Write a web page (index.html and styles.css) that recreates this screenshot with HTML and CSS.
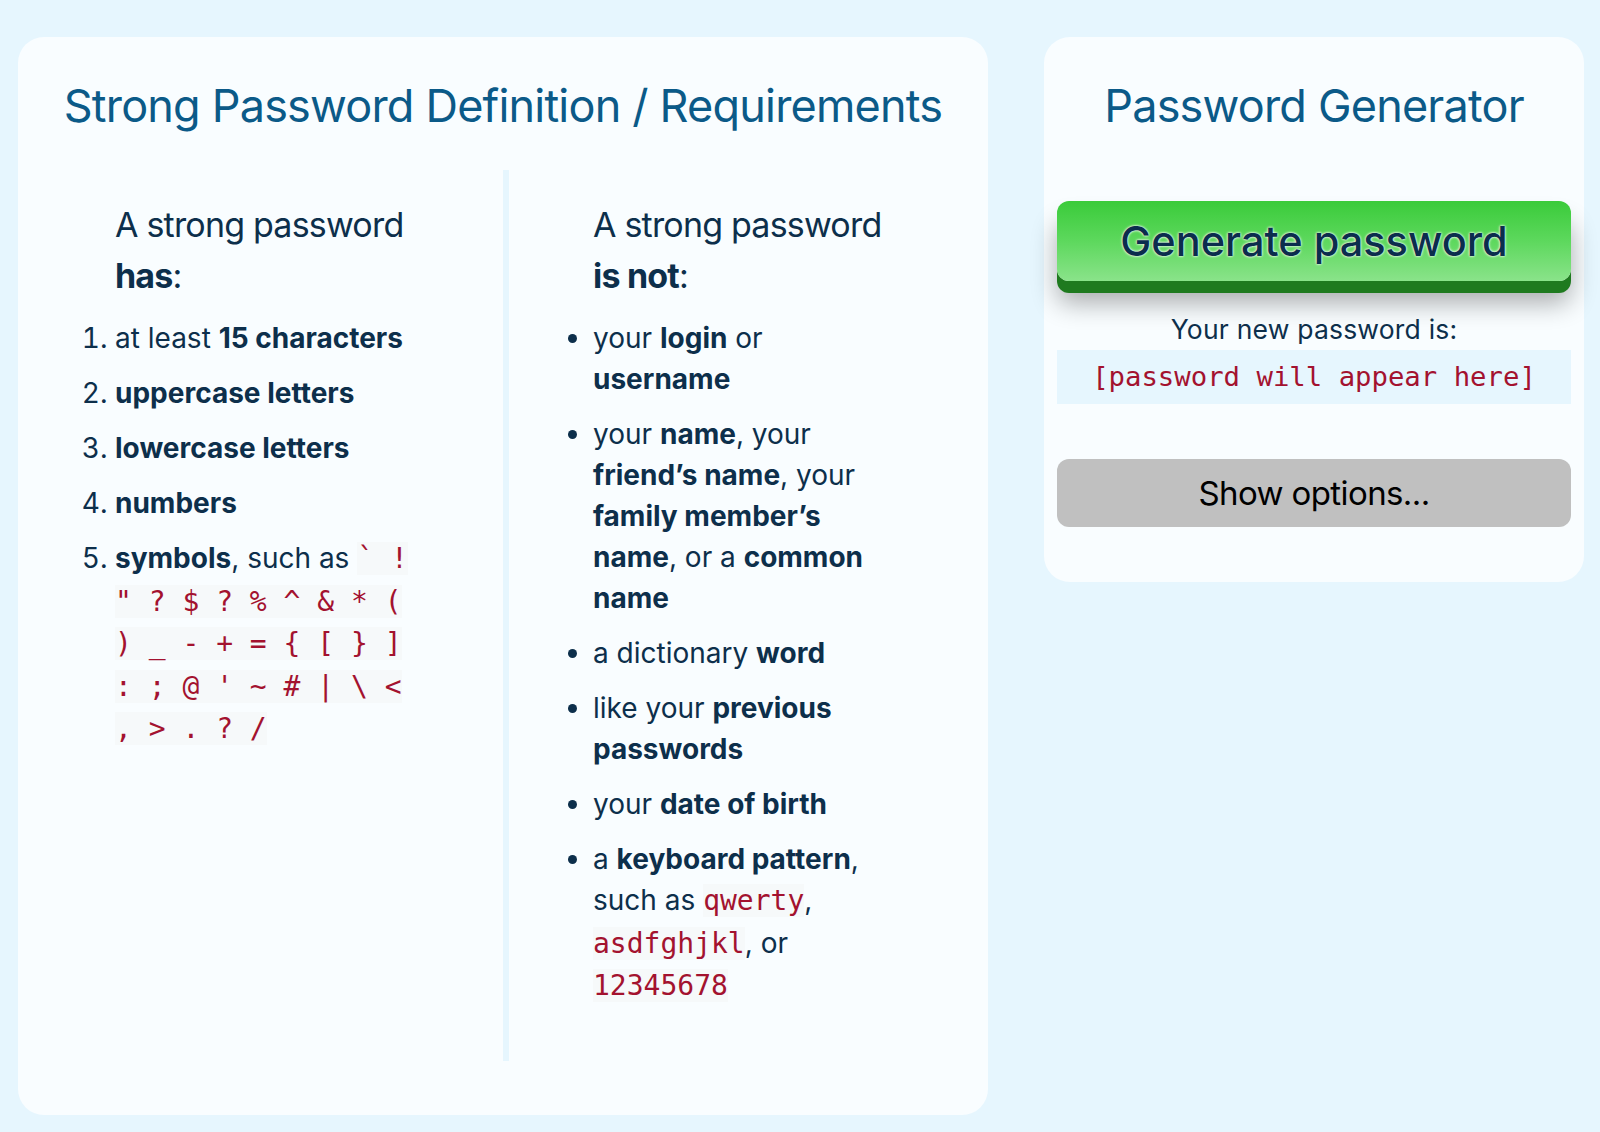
FILE: index.html
```
<!DOCTYPE html>
<html lang="en">
<head>
<meta charset="utf-8">
<title>Strong Password Generator</title>
<link rel="stylesheet" href="styles.css">
</head>
<body>
<main class="page">
  <section class="card card-info">
    <h1 class="card-title">Strong Password Definition / Requirements</h1>
    <div class="columns">
      <div class="col col-has">
        <h3 class="col-title">A strong password <strong>has</strong>:</h3>
        <ol class="req-list">
          <li>at least <strong>15 characters</strong></li>
          <li><strong>uppercase letters</strong></li>
          <li><strong>lowercase letters</strong></li>
          <li><strong>numbers</strong></li>
          <li><strong>symbols</strong>, such as <code>` ! " ? $ ? % ^ &amp; * ( ) _ - + = { [ } ] : ; @ ' ~ # | \ &lt; , &gt; . ? /</code></li>
        </ol>
      </div>
      <div class="divider"></div>
      <div class="col col-not">
        <h3 class="col-title">A strong password <strong>is not</strong>:</h3>
        <ul class="req-list">
          <li>your <strong>login</strong> or <strong>username</strong></li>
          <li>your <strong>name</strong>, your <strong>friend’s name</strong>, your <strong>family member’s name</strong>, or a <strong>common name</strong></li>
          <li>a dictionary <strong>word</strong></li>
          <li>like your <strong>previous passwords</strong></li>
          <li>your <strong>date of birth</strong></li>
          <li>a <strong>keyboard pattern</strong>, such as <code>qwerty</code>, <code>asdfghjkl</code>, or <code>12345678</code></li>
        </ul>
      </div>
    </div>
  </section>

  <section class="card card-gen">
    <h1 class="card-title">Password Generator</h1>
    <button class="btn-generate" type="button">Generate password</button>
    <p class="result-label">Your new password is:</p>
    <div class="result-box"><code class="result-code">[password will appear here]</code></div>
    <button class="btn-options" type="button">Show options...</button>
  </section>
</main>
</body>
</html>
```

FILE: styles.css
```
* {
  box-sizing: border-box;
}

html, body {
  margin: 0;
  padding: 0;
}

body {
  background: #e6f6fe;
  font-family: Inter, "Noto Sans", "Liberation Sans", sans-serif;
  color: #0d2f4b;
}

.page {
  display: grid;
  grid-template-columns: 970px 540px;
  column-gap: 56px;
  align-items: start;
  padding: 37px 16px 17px 18px;
}

.card {
  background: #f9fdff;
  border-radius: 26px;
}

.card-title {
  margin: 0;
  font-size: 45px;
  line-height: 54px;
  font-weight: 400;
  color: #0b5a88;
  text-align: center;
  letter-spacing: -0.8px;
}

/* ---------- left card ---------- */

.card-info {
  padding: 42px 0 54px;
}

.columns {
  display: flex;
  margin-top: 37px;
}

.col {
  padding-top: 29px;
}

.col-has {
  width: 485px;
  padding-left: 97px;
  padding-right: 85px;
}

.divider {
  width: 6px;
  background: #e6f6fe;
}

.col-not {
  flex: 1;
  padding-left: 84px;
  padding-right: 96px;
  padding-bottom: 39px;
}

.col-title {
  margin: 0 0 17px;
  font-size: 34px;
  line-height: 51px;
  font-weight: 400;
  letter-spacing: -0.8px;
}

.col-title strong {
  font-weight: 700;
}

.req-list {
  margin: 0;
  padding: 0;
  font-size: 28px;
  line-height: 41px;
}

.req-list li {
  margin-bottom: 14px;
}

.req-list strong {
  font-weight: 700;
}

code {
  font-family: "DejaVu Sans Mono", "Liberation Mono", monospace;
  font-size: 28px;
  line-height: 42.5px;
  color: #a3122f;
  background: #f6f9fa;
}

/* ---------- right card ---------- */

.card-gen {
  padding: 42px 13px 55px;
  display: flex;
  flex-direction: column;
  align-items: stretch;
}

.btn-generate {
  margin-top: 68px;
  height: 80px;
  border: none;
  border-radius: 12px;
  background: linear-gradient(to bottom, #3acb3a 0%, #5dd85d 50%, #8ae38a 100%);
  box-shadow: 0 12px 0 #1f7a1f, 0 22px 26px rgba(0, 0, 0, 0.32);
  font-family: Inter, "Noto Sans", sans-serif;
  font-size: 41.5px;
  font-weight: 500;
  color: #0b2d4d;
  text-shadow: 0 0 3px #ffffff, 0 0 2px rgba(255, 255, 255, 0.9);
  letter-spacing: 0;
  cursor: pointer;
}

.result-label {
  margin: 31px 0 4px;
  font-size: 26.5px;
  line-height: 34px;
  text-align: center;
  letter-spacing: 0.2px;
  color: #0d2f4b;
}

.result-box {
  height: 54px;
  background: #e6f6fe;
  text-align: center;
  line-height: 54px;
}

.result-code {
  font-size: 27.3px;
  line-height: 54px;
  background: transparent;
}

.btn-options {
  margin-top: 55px;
  height: 68px;
  border: none;
  border-radius: 12px;
  background: #c0c0c0;
  font-family: Inter, "Noto Sans", sans-serif;
  font-size: 33px;
  font-weight: 400;
  color: #000000;
  letter-spacing: -0.6px;
  cursor: pointer;
}
```
